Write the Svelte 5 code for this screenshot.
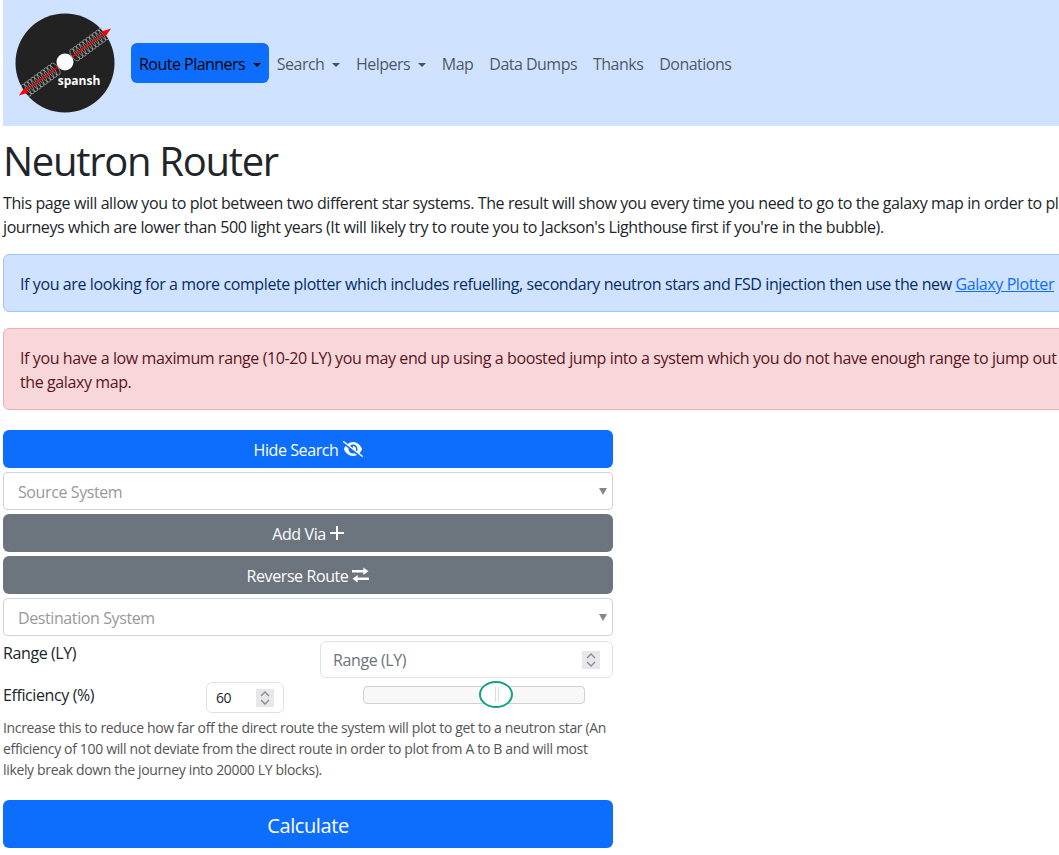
<script lang="ts">
  const navItems = [
    { label: "Search", caret: true },
    { label: "Helpers", caret: true },
    { label: "Map" },
    { label: "Data Dumps" },
    { label: "Thanks" },
    { label: "Donations" },
  ];

  // spring coils along the logo's diagonal, measured from the centre
  const coils = Array.from({ length: 10 }, (_, i) => 12 + i * 4);
</script>

<div class="page">
  <nav class="navbar">
    <svg class="logo" viewBox="0 0 100 100" width="100" height="100">
      <circle cx="50" cy="50" r="49.5" fill="#222" />
      <g transform="translate(50 49) rotate(-36)">
        {#each coils as x}
          <ellipse cx={x} cy="0" rx="3.200" ry="7" fill="none" stroke="#ccc" stroke-width=".55" />
          <ellipse cx={-x} cy="0" rx="3.200" ry="7" fill="none" stroke="#ccc" stroke-width=".55" />
        {/each}
        <path d="M-50 0H50" stroke="#f00" stroke-width="1.300" />
        <path d="M57 0l-9-3v6zM-57 0l9-3v6z" fill="#f00" />
      </g>
      <circle cx="50" cy="49" r="8.500" fill="#fff" />
      <text x="64" y="72" class="logo-text" text-anchor="middle">spansh</text>
    </svg>
    <ul class="nav">
      <li class="nav-link active">Route Planners <span class="caret"></span></li>
      {#each navItems as item}
        <li class="nav-link">
          {item.label}
          {#if item.caret}<span class="caret"></span>{/if}
        </li>
      {/each}
    </ul>
  </nav>

  <main>
    <h1>Neutron Router</h1>
    <p class="intro">
      This page will allow you to plot between two different star systems. The result will show you every time you need to go to the galaxy map in order to plot to the next neutron star. It is best for long<br />
      journeys which are lower than 500 light years (It will likely try to route you to Jackson's Lighthouse first if you're in the bubble).
    </p>

    <div class="alert info">
      If you are looking for a more complete plotter which includes refuelling, secondary neutron stars and FSD injection then use the new <a href="#galaxy">Galaxy Plotter</a>
    </div>
    <div class="alert danger">
      If you have a low maximum range (10-20 LY) you may end up using a boosted jump into a system which you do not have enough range to jump out of. You will then need to plot manually using<br />
      the galaxy map.
    </div>

    <form class="search">
      <button type="button" class="btn primary">
        Hide Search
        <svg width="20" height="16" viewBox="0 0 640 512" fill="#fff">
          <path d="M38.8 5.1C28.4-3.1 13.3-1.2 5.1 9.2S-1.2 34.7 9.2 42.9l592 464c10.4 8.2 25.5 6.3 33.7-4.1s6.3-25.5-4.1-33.7L525.6 386.7c39.6-40.6 66.4-86.1 79.9-118.4c3.3-7.9 3.3-16.7 0-24.6c-14.9-35.7-46.2-87.7-93-131.1C465.5 68.8 400.8 32 320 32c-68.2 0-125 26.3-169.3 60.8L38.8 5.1zM223.1 149.5C248.6 126.2 282.7 112 320 112c79.5 0 144 64.5 144 144c0 24.9-6.3 48.3-17.4 68.7L408 294.5c8.4-19.3 10.6-41.4 4.8-63.3c-11.1-41.5-47.8-69.4-88.6-71.1c-5.8-.2-9.2 6.1-7.4 11.7c2.1 6.4 3.3 13.2 3.3 20.3c0 10.2-2.4 19.8-6.6 28.3l-90.3-70.8zM373 389.9c-16.4 6.5-34.3 10.1-53 10.1c-79.5 0-144-64.5-144-144c0-6.9.5-13.6 1.4-20.2L83.1 161.5C60.3 191.2 44 220.8 34.5 243.7c-3.3 7.9-3.3 16.7 0 24.6c14.9 35.7 46.2 87.7 93 131.1C174.5 443.2 239.2 480 320 480c47.8 0 89.9-12.9 126.2-32.5L373 389.9z" />
        </svg>
      </button>

      <div class="select">
        <span>Source System</span>
        <span class="arrow"></span>
      </div>

      <button type="button" class="btn secondary">
        Add Via
        <svg width="14" height="14" viewBox="0 0 14 14" fill="none" stroke="#fff" stroke-width="2">
          <path d="M7 0v14M0 7h14" />
        </svg>
      </button>
      <button type="button" class="btn secondary">
        Reverse Route
        <svg width="17" height="16" viewBox="0 0 18 16" fill="#fff">
          <path d="M0 2.600h12V0l5.500 4-5.500 4V5.300H0zM18 10.700H6V8L.5 12 6 16v-2.600h12z" />
        </svg>
      </button>

      <div class="select">
        <span>Destination System</span>
        <span class="arrow"></span>
      </div>

      <div class="range-row">
        <label for="range">Range (LY)</label>
        <div class="number wide" id="range">
          <span class="placeholder">Range (LY)</span>
          <span class="spinner">
            <svg width="18" height="18" viewBox="0 0 18 18" fill="none" stroke="#8a8a8a" stroke-width="1.300">
              <path d="M5 7l4-4 4 4M5 11l4 4 4-4" />
            </svg>
          </span>
        </div>
      </div>

      <div class="efficiency-row">
        <label for="efficiency">Efficiency (%)</label>
        <div class="number small" id="efficiency">
          <span>60</span>
          <span class="spinner">
            <svg width="18" height="18" viewBox="0 0 18 18" fill="none" stroke="#8a8a8a" stroke-width="1.300">
              <path d="M5 7l4-4 4 4M5 11l4 4 4-4" />
            </svg>
          </span>
        </div>
        <div class="slider">
          <span class="handle"><i></i></span>
        </div>
      </div>

      <p class="help">
        Increase this to reduce how far off the direct route the system will plot to get to a neutron star (An efficiency of 100 will not deviate from the direct route in order to plot from A to B and will most likely break down the journey into 20000 LY blocks).
      </p>

      <button type="button" class="btn primary large">Calculate</button>
    </form>
  </main>
</div>

<style>
  :global(body) {
    overflow: hidden;
    background: #fff;
  }

  .page {
    width: 1400px;
    padding-left: 3px;
    font-family: "Open Sans", "Noto Sans", sans-serif;
    font-size: 16px;
    line-height: 24px;
    letter-spacing: -0.4px;
    color: #212529;
  }

  .navbar {
    display: flex;
    align-items: center;
    gap: 16px;
    height: 126px;
    padding-left: 12px;
    background: #cfe2ff;
  }

  .logo-text {
    font-family: "Open Sans", sans-serif;
    font-size: 12px;
    font-weight: 700;
    letter-spacing: 0;
    fill: #fff;
  }

  .nav {
    display: flex;
    align-items: center;
    margin: 0;
    padding: 0;
    list-style: none;
    letter-spacing: -0.52px;
  }

  .nav-link {
    padding: 9px 8px 7px;
    color: rgba(0, 0, 0, 0.65);
  }

  .nav-link.active {
    color: #000;
    background: #0d6efd;
    border-radius: 6px;
  }

  .caret {
    display: inline-block;
    margin-left: 4px;
    vertical-align: 3px;
    border-top: 4.8px solid;
    border-right: 4.8px solid transparent;
    border-left: 4.8px solid transparent;
  }

  h1 {
    margin: 11px 0 6px;
    font-size: 40px;
    font-weight: 400;
    line-height: 48px;
    letter-spacing: -1.3px;
  }

  .intro {
    margin: 0 0 15px;
  }

  .alert {
    margin-bottom: 16px;
    padding: 17px 16px 15px;
    border: 1px solid;
    border-radius: 6px;
  }

  .info {
    color: #052c65;
    background: #cfe2ff;
    border-color: #9ec5fe;
  }

  .info a {
    color: #0d6efd;
  }

  .danger {
    color: #58151c;
    background: #f8d7da;
    border-color: #f1aeb5;
  }

  .search {
    display: flex;
    flex-direction: column;
    gap: 4px;
    width: 610px;
    margin-top: 20px;
  }

  .btn {
    display: flex;
    align-items: center;
    justify-content: center;
    gap: 4px;
    box-sizing: border-box;
    height: 38px;
    padding: 2px 0 0;
    border: 0;
    border-radius: 6px;
    color: #fff;
    font: inherit;
    letter-spacing: inherit;
  }

  .btn svg {
    margin-top: -2px;
  }

  .primary {
    background: #0d6efd;
  }

  .secondary {
    background: #6c757d;
  }

  .large {
    height: 48px;
    margin-top: 16px;
    padding-top: 4px;
    font-size: 20px;
  }

  .select {
    display: flex;
    align-items: center;
    justify-content: space-between;
    box-sizing: border-box;
    height: 38px;
    padding: 2px 5px 0 14px;
    border: 1px solid #ced4da;
    border-radius: 4px;
    color: #999;
  }

  .arrow {
    margin-top: -2px;
    border-top: 7px solid #888;
    border-right: 4px solid transparent;
    border-left: 4px solid transparent;
  }

  .range-row {
    display: flex;
    justify-content: space-between;
    height: 37px;
    margin-top: 1px;
  }

  .efficiency-row {
    display: flex;
    align-items: flex-start;
    height: 31px;
  }

  .efficiency-row label {
    width: 203px;
    padding-top: 1px;
  }

  .number {
    display: flex;
    align-items: center;
    justify-content: space-between;
    box-sizing: border-box;
    border: 1px solid #dee2e6;
    border-radius: 6px;
  }

  .wide {
    width: 293px;
    height: 37px;
    padding: 1px 12px 0;
    color: #6c757d;
  }

  .small {
    width: 78px;
    height: 31px;
    padding: 0 9px;
    color: #212529;
    font-size: 14px;
  }

  .spinner {
    display: flex;
    background: #e6e6ec;
  }

  .slider {
    position: relative;
    box-sizing: border-box;
    width: 222px;
    height: 18px;
    margin: 4px 0 0 79px;
    background: #f8f8f8;
    border: 1px solid #d0d0d0;
    border-radius: 4px;
  }

  .handle {
    position: absolute;
    top: -6px;
    left: 115px;
    box-sizing: border-box;
    width: 34px;
    height: 27px;
    background: #fff;
    border: 2px solid #16a085;
    border-radius: 50%;
  }

  .handle i {
    position: absolute;
    top: 4px;
    left: 14px;
    width: 2px;
    height: 15px;
    border-right: 1px solid #ddd;
    border-left: 1px solid #ddd;
  }

  .help {
    margin: 0;
    color: #555;
    font-size: 14px;
    line-height: 21px;
    letter-spacing: -0.34px;
  }
</style>
